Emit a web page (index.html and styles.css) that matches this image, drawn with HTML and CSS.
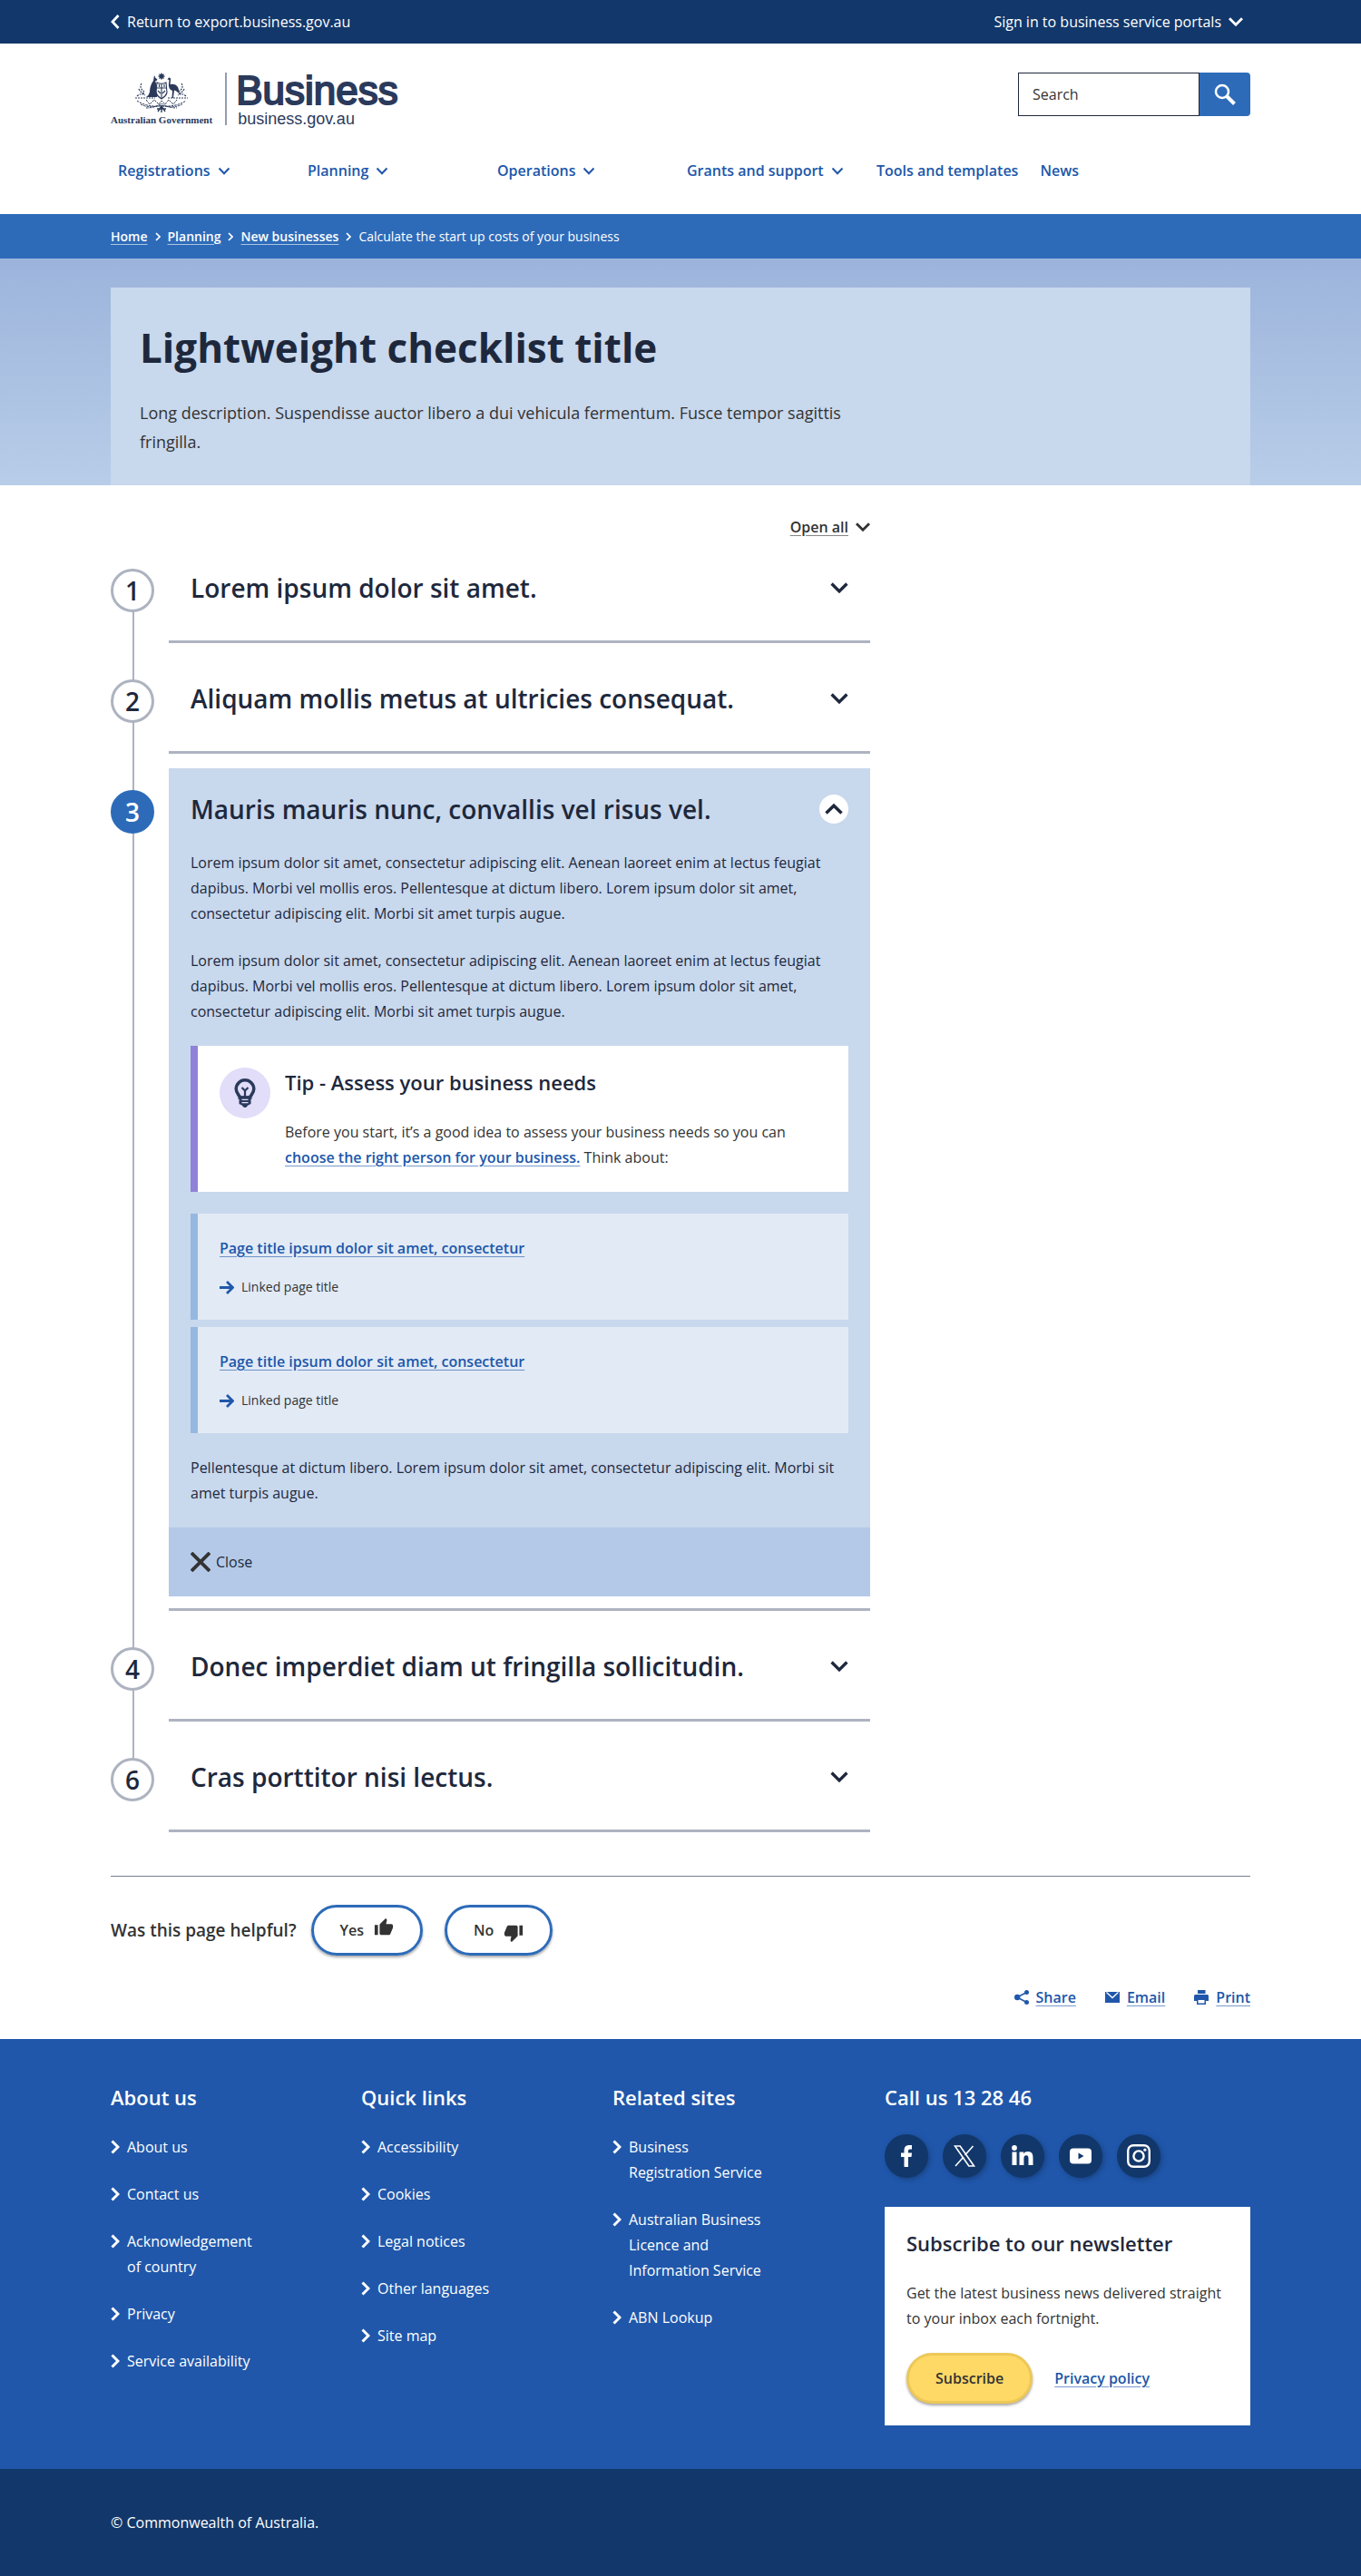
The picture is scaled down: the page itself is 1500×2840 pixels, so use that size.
FILE: index.html
```html
<!DOCTYPE html>
<html lang="en">
<head>
<meta charset="utf-8">
<meta name="viewport" content="width=device-width, initial-scale=1">
<title>Lightweight checklist title | business.gov.au</title>
<link rel="stylesheet" href="styles.css">
</head>
<body>
<svg class="sprite" aria-hidden="true">
  <symbol id="chev-down" viewBox="0 0 16 10"><path d="M1 1.200 8 8.200l7-7" fill="none" stroke="currentColor" stroke-width="2.800"/></symbol>
  <symbol id="chev-thin" viewBox="0 0 14 9"><path d="M1.500 1.500 7 7.300l5.500-5.800" fill="none" stroke="currentColor" stroke-width="2"/></symbol>
  <symbol id="chev-right" viewBox="0 0 10 16"><path d="M1.500 1.500 8 8l-6.500 6.500" fill="none" stroke="currentColor" stroke-width="3"/></symbol>
  <symbol id="crumb" viewBox="0 0 6 10"><path d="M1 1l4 4-4 4" fill="none" stroke="currentColor" stroke-width="1.700"/></symbol>
  <symbol id="arrow" viewBox="0 0 16 15"><path d="M0 7.500h13.500M8 1l6.500 6.500L8 14" fill="none" stroke="currentColor" stroke-width="2.800"/></symbol>
</svg>

<div class="topbar">
  <div class="container topbar-row">
    <a class="top-link" href="#"><svg class="icon-back" viewBox="0 0 10 16"><path d="M8.500 1 2 8l6.500 7" fill="none" stroke="currentColor" stroke-width="2.800"/></svg>Return to export.business.gov.au</a>
    <button class="top-link signin" type="button">Sign in to business service portals<svg class="icon-chev"><use href="#chev-down"/></svg></button>
  </div>
</div>

<header class="container header">
  <div class="brand-row">
    <a class="brand" href="#" aria-label="Australian Government Business">
      <span class="gov">
        <svg class="crest" viewBox="0 0 58 44" aria-hidden="true">
          <g fill="#2b3a5b" stroke="none">
            <path d="M29 0l1 2 2-.8-.8 2 2 .8-2 1 .8 2-2-.8-1 2-1-2-2 .8.800-2-2-1 2-.8-.8-2 2 .8z"/>
            <path d="M21 3l1.500 3 2 1.500-1 1.500-1.500.5c2 3 1.500 8 1 11 1 2 1.500 4 1 6.500H12c2-1 3.500-3 4-6 .500-6 2-9 4-12z"/>
            <path d="M37 5.500c2 0 2.500 1.500 2 3.500l-.5 4c3-1 7 0 8.500 3 1 2 1.500 5 1 7-1.500-2-3-3-5-3.500L42 28h-1.500l.5-8c-3-1-4.500-4-4-8l.5-4-2-.5z"/>
          </g>
          <g fill="none" stroke="#2b3a5b">
            <path d="M24 11c3 1.500 7 1.500 10 0l1 11c-1 4-3 5-6 7-3-2-5-3-6-7zM23.500 17h11M29 12v16M25 20l3 3M33 20l-3 3M26.500 13v3M32 13v3" stroke-width="1.100"/>
            <path d="M0 28h22M36 28h22M2 26q5-4 9-1M56 26q-5-4-9-1M7 12q-3 5 3 9M51 12q3 5-3 9M4 18q2 5 7 5M54 18q-2 5-7 5" stroke-width="1.200" stroke-dasharray="2 1"/>
            <path d="M2 31q10 7 26 6q18 1 28-6M6 35q10 5 22 1q14 4 24-1M12 39q10 0 17-5q7 5 17 5M12 30l4 5 5-5 5 5 3-4 4 4 4-5 5 5 4-5" stroke-width="1" stroke-dasharray="2.500 1"/>
            <path d="M25 43l4-6 4 6M29 36v8M24 40h10" stroke-width="1.400"/>
          </g>
        </svg>
        <span class="gov-name">Australian Government</span>
      </span>
      <span class="brand-name"><span class="brand-big">Business</span><span class="brand-small">business.gov.au</span></span>
    </a>
    <form class="search" role="search">
      <input class="search-input" type="text" placeholder="Search" aria-label="Search">
      <button class="search-btn" type="button" aria-label="Submit search"><svg class="icon-search" viewBox="0 0 24 24"><circle cx="9" cy="9" r="7" fill="none" stroke="currentColor" stroke-width="2.500"/><path d="M14 14l8.500 8.500" stroke="currentColor" stroke-width="4"/></svg></button>
    </form>
  </div>
  <nav class="nav" aria-label="Main">
    <a class="nav-link wide" href="#">Registrations<svg class="icon-nav"><use href="#chev-thin"/></svg></a>
    <a class="nav-link wide" href="#">Planning<svg class="icon-nav"><use href="#chev-thin"/></svg></a>
    <a class="nav-link wide" href="#">Operations<svg class="icon-nav"><use href="#chev-thin"/></svg></a>
    <a class="nav-link wide" href="#">Grants and support<svg class="icon-nav"><use href="#chev-thin"/></svg></a>
    <a class="nav-link" href="#">Tools and templates</a>
    <a class="nav-link" href="#">News</a>
  </nav>
</header>

<div class="crumbs">
  <nav class="container crumbs-row" aria-label="Breadcrumb">
    <a class="crumb" href="#">Home</a><svg class="icon-crumb"><use href="#crumb"/></svg>
    <a class="crumb" href="#">Planning</a><svg class="icon-crumb"><use href="#crumb"/></svg>
    <a class="crumb" href="#">New businesses</a><svg class="icon-crumb"><use href="#crumb"/></svg>
    <span>Calculate the start up costs of your business</span>
  </nav>
</div>

<div class="hero">
  <div class="container">
    <div class="hero-card">
      <h1 class="title">Lightweight checklist title</h1>
      <p class="lead">Long description. Suspendisse auctor libero a dui vehicula fermentum. Fusce tempor sagittis fringilla.</p>
    </div>
  </div>
</div>

<main class="container main">
  <div class="checklist">
    <div class="toolbar"><button class="open-all" type="button"><span class="ul">Open all</span><svg class="icon-chev"><use href="#chev-down"/></svg></button></div>
    <ol class="steps">
      <li class="step">
        <span class="num">1</span>
        <div class="body"><h2 class="step-head"><button class="toggle" type="button">Lorem ipsum dolor sit amet.<svg class="icon-step"><use href="#chev-down"/></svg></button></h2></div>
      </li>
      <li class="step">
        <span class="num">2</span>
        <div class="body"><h2 class="step-head"><button class="toggle" type="button">Aliquam mollis metus at ultricies consequat.<svg class="icon-step"><use href="#chev-down"/></svg></button></h2></div>
      </li>
      <li class="step open">
        <span class="num">3</span>
        <div class="body">
          <div class="panel">
            <h2 class="step-head"><button class="toggle" type="button">Mauris mauris nunc, convallis vel risus vel.<span class="up"><svg class="icon-up" viewBox="0 0 20 12"><path d="M1.500 10.500 10 2.200l8.500 8.300" fill="none" stroke="currentColor" stroke-width="3.500"/></svg></span></button></h2>
            <div class="content">
              <p class="text">Lorem ipsum dolor sit amet, consectetur adipiscing elit. Aenean laoreet enim at lectus feugiat dapibus. Morbi vel mollis eros. Pellentesque at dictum libero. Lorem ipsum dolor sit amet, consectetur adipiscing elit. Morbi sit amet turpis augue.</p>
              <p class="text">Lorem ipsum dolor sit amet, consectetur adipiscing elit. Aenean laoreet enim at lectus feugiat dapibus. Morbi vel mollis eros. Pellentesque at dictum libero. Lorem ipsum dolor sit amet, consectetur adipiscing elit. Morbi sit amet turpis augue.</p>
              <section class="tip">
                <span class="tip-icon"><svg class="bulb" viewBox="0 0 24 32"><path d="M12 1.800A9.800 9.800 0 0 0 2.200 11.500c0 4 2.200 5.800 4 8.500V21h11.600v-1c1.800-2.700 4-4.500 4-8.500A9.800 9.800 0 0 0 12 1.800z" fill="none" stroke="currentColor" stroke-width="3.500"/><path d="M12 20v-6.500M8.500 10l3.500 3.500 3.500-3.500" fill="none" stroke="currentColor" stroke-width="2.200"/><path d="M5.500 19.500h13V28l-3 1.500L13 32h-2l-2.500-2.500-3-1.500z" fill="currentColor"/><path d="M8.500 23.300h7M8.500 26.600h7" stroke="#e2ddf8" stroke-width="1.200"/></svg></span>
                <div class="tip-body">
                  <h3 class="tip-title">Tip - Assess your business needs</h3>
                  <p class="tip-text">Before you start, it’s a good idea to assess your business needs so you can <a class="link" href="#">choose the right person for your business.</a> Think about:</p>
                </div>
              </section>
              <div class="cards">
                <div class="card"><a class="link" href="#">Page title ipsum dolor sit amet, consectetur</a><span class="sub"><svg class="icon-arrow"><use href="#arrow"/></svg>Linked page title</span></div>
                <div class="card"><a class="link" href="#">Page title ipsum dolor sit amet, consectetur</a><span class="sub"><svg class="icon-arrow"><use href="#arrow"/></svg>Linked page title</span></div>
              </div>
              <p class="text">Pellentesque at dictum libero. Lorem ipsum dolor sit amet, consectetur adipiscing elit. Morbi sit amet turpis augue.</p>
            </div>
            <div class="close-bar"><button class="close" type="button"><svg class="icon-close" viewBox="0 0 22 22"><path d="M1 1l20 20M21 1 1 21" stroke="#333" stroke-width="3.800"/></svg>Close</button></div>
          </div>
        </div>
      </li>
      <li class="step">
        <span class="num">4</span>
        <div class="body"><h2 class="step-head"><button class="toggle" type="button">Donec imperdiet diam ut fringilla sollicitudin.<svg class="icon-step"><use href="#chev-down"/></svg></button></h2></div>
      </li>
      <li class="step">
        <span class="num">6</span>
        <div class="body"><h2 class="step-head"><button class="toggle" type="button">Cras porttitor nisi lectus.<svg class="icon-step"><use href="#chev-down"/></svg></button></h2></div>
      </li>
    </ol>
  </div>

  <div class="feedback">
    <span class="question">Was this page helpful?</span>
    <button class="vote" type="button">Yes<svg class="thumb" viewBox="0 0 24 24"><path d="M1 21h4V9H1v12zm22-11c0-1.100-.9-2-2-2h-6.300l1-4.600v-.3c0-.4-.2-.8-.4-1.100L14.200 1 7.600 7.600C7.200 8 7 8.500 7 9v10c0 1.100.9 2 2 2h9c.8 0 1.500-.5 1.800-1.200l3-7c.1-.3.200-.5.200-.8z" fill="currentColor"/></svg></button>
    <button class="vote" type="button">No<svg class="thumb down" viewBox="0 0 24 24"><path d="M23 3h-4v12h4V3zM1 14c0 1.100.9 2 2 2h6.300l-1 4.600v.3c0 .4.200.8.400 1.100L9.800 23l6.600-6.600c.4-.4.600-.9.600-1.400V5c0-1.100-.9-2-2-2H6c-.8 0-1.500.5-1.800 1.200l-3 7c-.1.300-.2.500-.2.800z" fill="currentColor"/></svg></button>
  </div>
  <div class="share">
    <a class="share-link" href="#"><svg class="icon-share" viewBox="0 0 16 16"><path d="M13.500 2.500 3 8l10.500 5.500" fill="none" stroke="currentColor" stroke-width="1.500"/><circle cx="3.200" cy="8" r="3.200" fill="currentColor"/><circle cx="13.500" cy="2.500" r="2.500" fill="currentColor"/><circle cx="13.500" cy="13.500" r="2.500" fill="currentColor"/></svg><span class="ul">Share</span></a>
    <a class="share-link" href="#"><svg class="icon-share" viewBox="0 0 16 16"><path d="M0 2h16v12H0z" fill="currentColor"/><path d="M1.500 2.500 8 8.500l6.500-6" fill="none" stroke="#fff" stroke-width="1.300"/></svg><span class="ul">Email</span></a>
    <a class="share-link" href="#"><svg class="icon-share" viewBox="0 0 16 16"><path d="M4 0h8.500v4H4zM1.500 5h13A1.500 1.500 0 0 1 16 6.500V12h-3v4H3v-4H0V6.500A1.500 1.500 0 0 1 1.500 5zM4.500 11v3.500h7V11z" fill="currentColor" fill-rule="evenodd"/></svg><span class="ul">Print</span></a>
  </div>
</main>

<footer>
  <div class="footer">
    <div class="container footer-grid">
      <div>
        <h2 class="foot-head">About us</h2>
        <ul class="foot-list">
          <li><a class="foot-link" href="#"><svg class="icon-foot"><use href="#chev-right"/></svg>About us</a></li>
          <li><a class="foot-link" href="#"><svg class="icon-foot"><use href="#chev-right"/></svg>Contact us</a></li>
          <li><a class="foot-link" href="#"><svg class="icon-foot"><use href="#chev-right"/></svg>Acknowledgement of country</a></li>
          <li><a class="foot-link" href="#"><svg class="icon-foot"><use href="#chev-right"/></svg>Privacy</a></li>
          <li><a class="foot-link" href="#"><svg class="icon-foot"><use href="#chev-right"/></svg>Service availability</a></li>
        </ul>
      </div>
      <div>
        <h2 class="foot-head">Quick links</h2>
        <ul class="foot-list">
          <li><a class="foot-link" href="#"><svg class="icon-foot"><use href="#chev-right"/></svg>Accessibility</a></li>
          <li><a class="foot-link" href="#"><svg class="icon-foot"><use href="#chev-right"/></svg>Cookies</a></li>
          <li><a class="foot-link" href="#"><svg class="icon-foot"><use href="#chev-right"/></svg>Legal notices</a></li>
          <li><a class="foot-link" href="#"><svg class="icon-foot"><use href="#chev-right"/></svg>Other languages</a></li>
          <li><a class="foot-link" href="#"><svg class="icon-foot"><use href="#chev-right"/></svg>Site map</a></li>
        </ul>
      </div>
      <div>
        <h2 class="foot-head">Related sites</h2>
        <ul class="foot-list">
          <li><a class="foot-link" href="#"><svg class="icon-foot"><use href="#chev-right"/></svg>Business Registration Service</a></li>
          <li><a class="foot-link" href="#"><svg class="icon-foot"><use href="#chev-right"/></svg>Australian Business Licence and Information Service</a></li>
          <li><a class="foot-link" href="#"><svg class="icon-foot"><use href="#chev-right"/></svg>ABN Lookup</a></li>
        </ul>
      </div>
      <div>
        <h2 class="foot-head">Call us 13 28 46</h2>
        <div class="socials">
          <a class="social" href="#" aria-label="Facebook"><svg class="soc-icon" viewBox="0 0 28 28"><path d="M11.500 26V15H8v-4.500h3.500V8c0-4 2-6 5.500-6h3v4.500h-2c-1.500 0-2 .7-2 2v2h4l-.5 4.500H16v11z" fill="#fff"/></svg></a>
          <a class="social" href="#" aria-label="X"><svg class="soc-icon" viewBox="0 0 28 28"><path d="M3.500 3h5.700l15.300 22h-5.700zM23.500 3l-9 10M4 25l9-10" fill="none" stroke="#fff" stroke-width="1.600"/></svg></a>
          <a class="social" href="#" aria-label="LinkedIn"><svg class="soc-icon" viewBox="0 0 28 28"><circle cx="5" cy="5" r="2.900" fill="#fff"/><path d="M2.500 9.500h5V24h-5zM10.500 9.500h4.700v2c1-1.700 2.700-2.400 4.600-2.400 4.700 0 5.700 3 5.700 7.200V24h-5v-7c0-2-.3-3.800-2.400-3.800s-2.700 1.600-2.700 3.700V24h-4.900z" fill="#fff"/></svg></a>
          <a class="social" href="#" aria-label="YouTube"><svg class="soc-icon" viewBox="0 0 28 28"><rect x="2" y="5.500" width="24" height="17" rx="4" fill="#fff"/><path d="M11.500 10.500v7l6-3.500z" fill="#12376a"/></svg></a>
          <a class="social" href="#" aria-label="Instagram"><svg class="soc-icon" viewBox="0 0 28 28"><rect x="2.200" y="2.200" width="23.600" height="23.600" rx="6" fill="none" stroke="#fff" stroke-width="2.400"/><circle cx="14" cy="14" r="5.600" fill="none" stroke="#fff" stroke-width="2.400"/><circle cx="20.900" cy="7.200" r="1.600" fill="#fff"/></svg></a>
        </div>
        <section class="newsletter">
          <h3 class="news-title">Subscribe to our newsletter</h3>
          <p class="news-text">Get the latest business news delivered straight to your inbox each fortnight.</p>
          <div class="news-row"><button class="subscribe" type="button">Subscribe</button><a class="link" href="#">Privacy policy</a></div>
        </section>
      </div>
    </div>
  </div>
  <div class="copyright"><div class="container">© Commonwealth of Australia.</div></div>
</footer>
</body>
</html>
```
FILE: styles.css
```css
* { box-sizing: border-box; }
body {
  margin: 0;
  background: #fff;
  color: #333;
  font-family: "Open Sans", "Noto Sans", sans-serif;
  font-size: 16px;
  line-height: 28px;
}
h1, h2, h3, p, ul, ol { margin: 0; padding: 0; }
ul, ol { list-style: none; }
a { color: inherit; text-decoration: none; }
button { margin: 0; padding: 0; border: 0; background: none; color: inherit; font: inherit; cursor: pointer; }
svg { flex: none; display: block; }
.sprite { position: absolute; width: 0; height: 0; }
.container { max-width: 1304px; margin: 0 auto; padding: 0 24px; }

/* Top bar */
.topbar { background: #12376a; color: #fff; }
.topbar-row { display: flex; justify-content: space-between; align-items: center; height: 48px; }
.top-link { display: flex; align-items: center; gap: 8px; }
.signin { padding-right: 8px; }
.icon-back { width: 10px; height: 16px; }
.icon-chev { width: 16px; height: 10px; }

/* Header */
.header { padding-top: 32px; padding-bottom: 34px; }
.brand-row { display: flex; justify-content: space-between; align-items: flex-start; }
.brand { display: flex; height: 62px; color: #2b3a5b; }
.gov { display: flex; flex-direction: column; align-items: center; gap: 2px; padding-right: 14px; height: 58px; border-right: 2px solid #959cad; }
.crest { width: 58px; height: 44px; }
.gov-name { font: bold 11px/12px "Liberation Serif", serif; white-space: nowrap; }
.brand-name { display: flex; flex-direction: column; padding-left: 10px; font-family: "Liberation Sans", sans-serif; }
.brand-big { font-size: 44px; line-height: 40px; -webkit-text-stroke: 2px #2b3a5b; }
.brand-small { padding-left: 2px; font-size: 18px; line-height: 22px; }
.search { display: flex; width: 256px; height: 48px; }
.search-input { flex: 1; min-width: 0; padding: 0 15px; border: 1px solid #1e283c; border-radius: 0; background: #fff; color: #333; font: inherit; }
.search-input::placeholder { color: #333; opacity: 1; }
.search-btn { display: flex; align-items: center; justify-content: center; width: 56px; border-radius: 0 4px 4px 0; background: #2d6bb9; color: #fff; }
.icon-search { width: 24px; height: 24px; }
.nav { display: flex; gap: 24px; margin-top: 32px; padding-left: 8px; color: #2057aa; font-weight: 600; }
.nav-link { display: flex; align-items: center; gap: 8px; }
.wide { width: 185px; }
.icon-nav { width: 14px; height: 9px; }

/* Breadcrumb */
.crumbs { background: #2d6bb9; color: #fff; font-size: 14px; }
.crumbs-row { display: flex; align-items: center; gap: 8px; height: 49px; }
.crumb { font-weight: 600; text-decoration: underline; text-decoration-color: #ffffff99; text-underline-offset: 3px; }
.icon-crumb { width: 6px; height: 10px; }

/* Hero */
.hero { padding-top: 32px; background: linear-gradient(#9cb4dc, #b8cde8); }
.hero-card { padding: 32px; background: #c8d8ed; }
.title { color: #1e283c; font-size: 44px; line-height: 68px; font-weight: 700; }
.lead { max-width: 800px; margin-top: 22px; font-size: 18px; line-height: 32px; }

/* Checklist */
.checklist { max-width: 837px; padding-top: 32px; }
.toolbar { display: flex; justify-content: flex-end; }
.open-all { display: flex; align-items: center; gap: 8px; font-weight: 600; }
.open-all .ul { text-decoration: underline; text-decoration-color: #33333399; text-underline-offset: 3px; }
.steps { margin-top: 8px; color: #1e283c; }
.step {
  display: flex;
  gap: 16px;
  background: linear-gradient(#adb3c0, #adb3c0) 24px 0 / 2px 100% no-repeat;
}
.step:first-child { background-position: 24px 24px; }
.step:last-child { background-size: 2px 24px; }
.num {
  flex: none;
  width: 48px;
  height: 48px;
  margin-top: 24px;
  border: 3px solid #adb3c0;
  border-radius: 50%;
  background: #fff;
  font-size: 28px;
  line-height: 42px;
  font-weight: 600;
  text-align: center;
}
.open .num { border-color: #2d6bb9; background: #2d6bb9; color: #fff; }
.body { flex: 1; margin-bottom: 16px; padding-bottom: 13px; border-bottom: 3px solid #adb3c0; }
.step-head { padding: 23px 24px; font-size: 28px; line-height: 44px; font-weight: 600; }
.toggle { display: flex; justify-content: space-between; align-items: center; width: 100%; text-align: left; }
.icon-step { width: 20px; height: 12px; }
.panel { background: #c8d8ed; }
.up { display: flex; align-items: center; justify-content: center; width: 32px; height: 32px; border-radius: 50%; background: #fff; }
.icon-up { width: 20px; height: 12px; }
.content { display: flex; flex-direction: column; gap: 24px; padding: 0 24px 24px; }
.tip { display: flex; gap: 16px; padding: 24px; border-left: 8px solid #8f82d8; background: #fff; color: #333; }
.tip-icon { display: flex; flex: none; align-items: center; justify-content: center; width: 56px; height: 56px; border-radius: 50%; background: #e2ddf8; color: #2b3a5b; }
.bulb { width: 24px; height: 32px; }
.tip-title { color: #1e283c; font-size: 22px; line-height: 33px; font-weight: 600; }
.tip-text { margin-top: 24px; }
.link { color: #2057aa; font-weight: 600; text-decoration: underline; text-decoration-color: #2057aa99; text-underline-offset: 3px; }
.cards { display: flex; flex-direction: column; gap: 8px; }
.card { display: flex; flex-direction: column; align-items: flex-start; gap: 15px; padding: 24px 24px 22px; border-left: 8px solid #96b8e0; background: #e2eaf5; }
.sub { display: flex; align-items: center; gap: 8px; color: #333; font-size: 14px; }
.icon-arrow { width: 16px; height: 15px; color: #2057aa; }
.close-bar { padding: 24px; background: #b3c9e7; }
.close { display: flex; align-items: center; gap: 6px; }
.icon-close { width: 22px; height: 22px; }

/* Feedback and sharing */
.feedback { display: flex; align-items: center; margin-top: 32px; padding-top: 31px; border-top: 1px solid #76808f; }
.question { margin-right: 16px; font-size: 19px; font-weight: 600; }
.vote { display: flex; align-items: center; gap: 11px; height: 56px; margin-right: 24px; padding: 0 29px; border: 3px solid #2d6bb9; border-radius: 28px; box-shadow: 0 2px 3px #00000059; font-weight: 600; }
.thumb { width: 22px; height: 22px; margin-bottom: 6px; }
.down { margin: 6px 0 0; }
.share { display: flex; justify-content: flex-end; gap: 32px; padding: 32px 0; color: #2057aa; font-weight: 600; }
.share-link { display: flex; align-items: center; gap: 8px; }
.share-link .ul { text-decoration: underline; text-decoration-color: #2057aa99; text-underline-offset: 3px; }
.icon-share { width: 16px; height: 16px; }

/* Footer */
.footer { padding: 48px 0; background: #2057aa; color: #fff; }
.footer-grid { display: grid; grid-template-columns: 276px 277px 1fr 403px; }
.foot-head { font-size: 22px; line-height: 33px; font-weight: 600; }
.foot-list { display: flex; flex-direction: column; gap: 24px; max-width: 172px; margin-top: 24px; }
.foot-link { display: flex; gap: 8px; }
.icon-foot { width: 10px; height: 16px; margin-top: 6px; }
.socials { display: flex; gap: 16px; margin-top: 24px; }
.social { display: flex; align-items: center; justify-content: center; width: 48px; height: 48px; border-radius: 50%; background: #12376a; box-shadow: 2px 2px 5px #12376a99; }
.soc-icon { width: 28px; height: 28px; }
.newsletter { margin-top: 32px; padding: 24px; background: #fff; color: #333; }
.news-title { color: #1e283c; font-size: 22px; line-height: 33px; font-weight: 600; }
.news-text { margin-top: 24px; }
.news-row { display: flex; align-items: center; gap: 24px; margin-top: 24px; }
.subscribe { height: 56px; padding: 0 29px; border: 3px solid #edc858; border-radius: 28px; background: #fed966; box-shadow: 0 2px 3px #00000059; font-weight: 600; }
.copyright { padding: 45px 0; background: #12376a; color: #fff; }
```
